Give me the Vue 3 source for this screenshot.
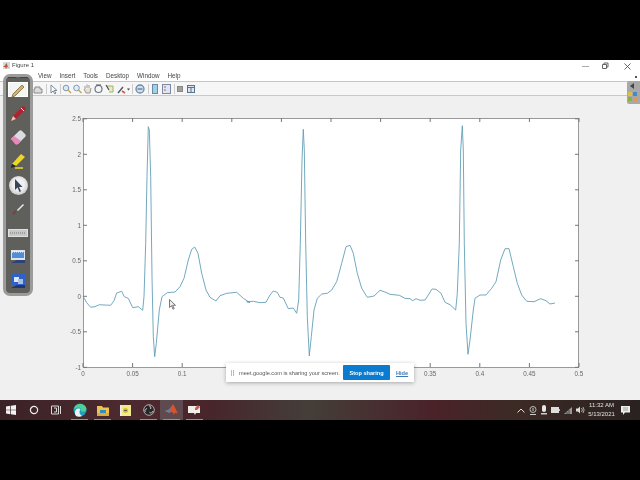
<script setup>
const s7 = [[10,560],[20,578],[32,592],[45,590],[58,584],[72,585],[92,586],[102,572],[110,549],[125,544],[133,560],[145,565],[158,593],[175,590],[188,601],[192,560],[197,400],[201,200],[205,50],[208,60],[212,200],[216,500],[220,680],[224,740],[229,700],[238,600],[246,560],[262,548],[285,546],[300,530],[312,505],[325,450],[335,418],[344,411],[354,430],[365,490],[378,540],[390,562],[408,573],[420,557],[440,550],[470,547],[490,565],[510,578]]
const s8 = [[20,575],[40,574],[60,578],[78,577],[90,555],[100,543],[112,547],[120,562],[130,564],[145,596],[160,594],[170,610],[176,570],[181,400],[186,150],[190,58],[193,120],[197,400],[202,620],[208,738],[214,680],[222,600],[232,565],[245,552],[262,550],[275,540],[290,515],[305,460],[318,410],[330,406],[340,430],[352,490],[365,535],[382,562],[402,558],[420,541],[435,546],[450,553],[478,556],[495,565],[510,566]]
const s9 = [[8,572],[18,566],[30,571],[45,570],[55,555],[66,537],[78,538],[93,550],[105,577],[120,584],[137,600],[142,550],[148,400],[152,120],[157,47],[160,120],[163,400],[168,640],[174,733],[180,690],[190,600],[195,565],[210,555],[228,555],[245,535],[258,515],[272,450],[285,416],[297,416],[310,470],[322,520],[335,555],[350,574],[372,575],[392,566],[408,572],[420,582],[435,579]]
const conv = (pts, ox) => pts.map(([x, y]) => `${(ox + x / 3).toFixed(1)},${(110 + y / 3).toFixed(1)}`)
const curve = [...conv(s7, 80), ...conv(s8, 240), ...conv(s9, 410)].join(' ')

const xTicks = ['0', '0.05', '0.1', '0.15', '0.2', '0.25', '0.3', '0.35', '0.4', '0.45', '0.5'].map((label, i) => ({ label, x: 83 + i * 49.6 }))
const xLabels = xTicks.filter(t => t.x < 226 || t.x > 414)
const yTicks = ['2.5', '2', '1.5', '1', '0.5', '0', '-0.5', '-1'].map((label, i) => ({ label, y: 118.8 + i * 35.5 }))
const menus = ['View', 'Insert', 'Tools', 'Desktop', 'Window', 'Help']
</script>

<template>
  <div class="screen">
    <div class="bar-black"></div>
    <div class="window">
      <div class="titlebar">
        <svg class="app-ico" width="7" height="7" viewBox="0 0 7 7">
          <rect width="7" height="7" fill="#d9d9d9" />
          <path d="M0 5 2.500 3 3.500 1 5 5 7 6 4 5 3 7 2 5Z" fill="#c8562a" />
          <path d="M2.500 3 3.500 1 3.500 4Z" fill="#3d6f9e" />
        </svg>
        <span class="title">Figure 1</span>
        <span class="spacer"></span>
        <svg class="controls" width="60" height="10" viewBox="0 0 60 10">
          <path d="M2 5.500H9" stroke="#aaa" />
          <path d="M22.500 3.500h4v4h-4zM24 3.500v-1.500h4v4h-1.500" fill="none" stroke="#666" />
          <path d="M44.500 2.500l6 6M50.500 2.500l-6 6" stroke="#555" stroke-width=".9" />
        </svg>
      </div>
      <div class="menubar">
        <span v-for="m in menus" :key="m">{{ m }}</span>
      </div>
      <svg class="toolbar" width="640" height="13" viewBox="0 82 640 13">
        <g fill="none" stroke-width="1">
          <path d="M35 87h5v2h2v4h-8v-4h1z" fill="#dcdcdc" stroke="#888" />
          <path d="M46.500 84v10M60.500 84v10M132.500 84v10M148.500 84v10M174.500 84v10" stroke="#ccc" />
          <path d="M51 85v8l2-2 2 3 1-1-2-2.500h3z" stroke="#7d8c9a" fill="#fff" />
          <circle cx="66" cy="88" r="2.800" stroke="#7d9ab8" fill="#dce9f5" />
          <path d="M68 90l3 3" stroke="#c0a050" stroke-width="1.300" />
          <circle cx="76.500" cy="88" r="2.800" stroke="#7d9ab8" fill="#e4edf5" />
          <path d="M78.500 90l3 3" stroke="#c0a050" stroke-width="1.300" />
          <path d="M85 89v-3M87 88v-3.500M89 88v-3M84 89l2 4h4l1-5" stroke="#999" fill="#f0ddcc" />
          <circle cx="98.500" cy="89" r="3.500" stroke="#6a7a88" stroke-width="1.200" />
          <path d="M96 85h5" stroke="#555" />
          <path d="M107 86h6v6h-4" stroke="#a0b460" fill="#e4eccd" />
          <path d="M106 85l3 5" stroke="#444" stroke-width="1.100" />
          <path d="M118 93l5-6" stroke="#4a5a68" stroke-width="1.400" />
          <path d="M122 91l3 2" stroke="#d0604a" stroke-width="1.800" />
          <path d="M127 88.500h3l-1.500 2z" fill="#444" />
          <circle cx="140" cy="89" r="4" stroke="#6a8aa8" stroke-width="1.300" fill="#cfe0ee" />
          <path d="M137.500 89h5" stroke="#557" />
          <rect x="152.500" y="84.500" width="5" height="9" stroke="#6a8aa8" fill="#9fd0e8" />
          <rect x="162.500" y="84.500" width="8" height="9" stroke="#7a8aa8" fill="#dfe6f0" />
          <path d="M164 87h2M164 90h2" stroke="#c06060" />
          <rect x="177.500" y="86.500" width="5" height="5" stroke="#888" fill="#a0a0a0" />
          <rect x="187.500" y="85.500" width="7" height="7" stroke="#557590" fill="#dfe6ee" />
          <path d="M188 87.500h6M191 88v4" stroke="#557590" />
        </g>
      </svg>
      <div class="figure">
        <svg class="plot" width="640" height="305" viewBox="0 96 640 305">
          <rect x="83.500" y="118.500" width="495" height="249" fill="#fff" stroke="#999" />
          <g stroke="#777" stroke-width="1">
            <g v-for="t in xTicks" :key="'x' + t.label">
              <path :d="`M${t.x} 118v4M${t.x} 367v-4`" />
            </g>
            <g v-for="t in yTicks" :key="'y' + t.label">
              <path :d="`M83 ${t.y}h4M579 ${t.y}h-4`" />
            </g>
          </g>
          <polyline :points="curve" fill="none" stroke="#639fb7" stroke-width=".9" stroke-linejoin="round" />
          <g class="ticktext">
            <text v-for="t in xLabels" :key="'lx' + t.label" :x="t.x" y="376" text-anchor="middle">{{ t.label }}</text>
            <text v-for="t in yTicks" :key="'ly' + t.label" x="81" :y="t.y + 2.500" text-anchor="end">{{ t.label }}</text>
          </g>
        </svg>
      </div>
    </div>
    <div class="taskbar">
      <div class="task first">
        <svg width="10" height="10" viewBox="0 0 10 10"><path d="M0 1.500 4.300.8v3.900H0zM5 .7 10 0v4.700H5zM0 5.300h4.300v3.900L0 8.500zM5 5.300h5V10l-5-.7z" fill="#f2f2f2" /></svg>
      </div>
      <div class="task">
        <svg width="10" height="10" viewBox="0 0 10 10"><circle cx="5" cy="5" r="3.600" fill="none" stroke="#eee" stroke-width="1.200" /></svg>
      </div>
      <div class="task">
        <svg width="11" height="10" viewBox="0 0 11 10"><path d="M.5 1h7v8h-7zM3 3h2.500v4H3M9.500 1v8" fill="none" stroke="#d8d8d8" /></svg>
      </div>
      <div class="task run">
        <svg width="14" height="14" viewBox="0 0 14 14">
          <circle cx="7" cy="7" r="6.500" fill="#1f9fc0" />
          <path d="M1 6C2 1 8-.5 12 3c1.500 1.500 1.500 3 1 4.500-1 1.500-4 1.500-5 .5 1-2-1-4-3-3.500C3.500 5 2 5.500 1 6z" fill="#4fd28f" />
          <path d="M3 13c-2-3-1-7 2-7.500 1-.2 2 0 2.500 1C6 8 6 11 9 13c-2 1-4 1-6 0z" fill="#eaf4f8" />
        </svg>
      </div>
      <div class="task run">
        <svg width="12" height="11" viewBox="0 0 12 11"><path d="M0 1h5l1 1.500h6V11H0z" fill="#f0c24e" /><path d="M3 5h6v3H3z" fill="#2f8fc0" /><path d="M0 8h12v3H0z" fill="#e0a93a" /></svg>
      </div>
      <div class="task">
        <svg width="11" height="11" viewBox="0 0 11 11"><rect width="11" height="11" fill="#f2e98a" /><rect y="0" width="1.500" height="11" fill="#eee" /><circle cx="5.500" cy="5.500" r="2.500" fill="#d8c020" /><path d="M4 5.500h3" stroke="#555" /></svg>
      </div>
      <div class="task run">
        <svg width="12" height="12" viewBox="0 0 12 12">
          <circle cx="6" cy="6" r="5.300" fill="#2a2527" stroke="#ccc" stroke-width="0.800" />
          <path d="M6 1.800a2 2 0 0 1 1.500 3.200M10 7a2 2 0 0 1-3.500 1.200M2.300 7.800a2 2 0 0 1 1.700-3.100" fill="none" stroke="#ccc" stroke-width="1" />
        </svg>
      </div>
      <div class="task run active">
        <svg width="13" height="12" viewBox="0 0 13 12">
          <path d="M0 7l4-1.500L8 0c1.500 2 3 6 5 9.500C11 8.500 10 8 9 10.500 7.500 8 6 7 4.500 9z" fill="#d8532a" />
          <path d="M0 7l4-1.500 2-2L4.500 9z" fill="#4a86c0" />
        </svg>
      </div>
      <div class="task run">
        <svg width="13" height="11" viewBox="0 0 13 11"><path d="M0 1h12v7H8l-1 2-1-2H0z" fill="#f2efe6" /><path d="M10 0l2 2-3 3h-2V3z" fill="#c0605a" /></svg>
      </div>
      <span class="spacer"></span>
      <div class="tray">
        <svg width="8" height="5" viewBox="0 0 8 5"><path d="M.5 4.500 4 1l3.500 3.500" fill="none" stroke="#ddd" /></svg>
        <svg width="8" height="9" viewBox="0 0 8 9"><circle cx="4" cy="3.500" r="3" fill="none" stroke="#bbb" /><path d="M1 8.500h6M4 2v3" stroke="#ccc" /></svg>
        <svg width="6" height="10" viewBox="0 0 6 10"><rect x="1" width="4" height="7" rx="2" fill="#e8e8e8" /><path d="M0 8h6v1.500H0z" fill="#ccc" /></svg>
        <svg width="9" height="6" viewBox="0 0 9 6"><rect width="8" height="6" fill="#ddd" /><rect x="8" y="2" width="1" height="2" fill="#bbb" /></svg>
        <svg width="8" height="7" viewBox="0 0 8 7"><path d="M0 7 8 0v7z" fill="#999" /><path d="M3 7V5M5 7V3" stroke="#444" /></svg>
        <svg width="9" height="8" viewBox="0 0 9 8"><path d="M0 2.500h2L4 .5v7l-2-2H0z" fill="#ddd" /><path d="M5.500 2a3 3 0 0 1 0 4M7 1a5 5 0 0 1 0 6" fill="none" stroke="#ccc" stroke-width=".8" /></svg>
      </div>
      <div class="clock"><span>11:32 AM</span><span>5/13/2021</span></div>
      <svg class="notif" width="9" height="9" viewBox="0 0 9 9"><path d="M0 0h9v6.500H4L2 9V6.500H0z" fill="#eee" /><path d="M2 2h5M2 4h5" stroke="#777" stroke-width=".7" /></svg>
    </div>
    <div class="bar-black"></div>

    <div class="notebook">
      <div class="grip"><i></i><i></i></div>
      <div class="tool">
        <svg width="20" height="15" viewBox="0 0 20 15"><rect x=".5" y=".5" width="19" height="14" fill="#f4f4f0" stroke="#fff" /><path d="M5 12 14 3l2 2-9 9-3 1z" fill="#d8b26a" stroke="#6a5a3a" stroke-width=".7" /></svg>
      </div>
      <div class="tool">
        <svg width="17" height="17" viewBox="0 0 17 17"><path d="M1 16l2-5L12 2c1-1 2-1 3 0s1 2 0 3l-9 9z" fill="#b4202e" /><path d="M1 16l2-5 3 3z" fill="#e8c8b0" /><path d="M11 3l3 3" stroke="#eec" /></svg>
      </div>
      <div class="tool">
        <svg width="17" height="15" viewBox="0 0 17 15"><path d="M1 9 9 1c1-1 2-1 3 0l3 3c1 1 1 2 0 3l-7 7z" fill="#d8dde4" /><path d="M1 9l3-3 7 5-3 3c-1 1-2 1-3 0z" fill="#e888b8" /></svg>
      </div>
      <div class="tool">
        <svg width="16" height="16" viewBox="0 0 16 16"><path d="M2 11 11 1l4 3-9 9z" fill="#ecd820" /><path d="M1 15l1-4 4 2z" fill="#222" /><path d="M5 15h8" stroke="#ecd820" stroke-width="1.500" /></svg>
      </div>
      <div class="tool">
        <div class="round">
          <svg width="9" height="13" viewBox="0 0 9 13"><path d="M1 0v11l2.500-2.500L5.500 13l1.500-.7-2-4.300H8.500z" fill="#3a4458" /></svg>
        </div>
      </div>
      <div class="tool">
        <svg width="14" height="14" viewBox="0 0 14 14"><path d="M6 8l6-6 1 1-6 6z" fill="#eee" /><path d="M5 9 2 12" stroke="#8a3a3a" stroke-width="2" /></svg>
      </div>
      <div class="tool">
        <svg width="20" height="10" viewBox="0 0 20 10"><rect x=".5" y="1.500" width="19" height="7" fill="#c8c8c8" stroke="#e0e0e0" /><path d="M2 5h16" stroke="#777" stroke-dasharray="1 1" /></svg>
      </div>
      <div class="tool">
        <svg width="14" height="14" viewBox="0 0 14 14"><rect width="14" height="10" fill="#dde4ee" /><rect x="1" y="2" width="12" height="6" fill="#4f8fd8" /><path d="M1 2h12" stroke="#fff" stroke-dasharray="1 1" /><path d="M0 13l6-3h8v3z" fill="#2f3f78" /></svg>
      </div>
      <div class="tool">
        <svg width="14" height="15" viewBox="0 0 14 15"><rect width="14" height="11" fill="#2f62c8" /><rect x="3" y="3" width="5" height="5" fill="#dfe8f5" /><rect x="7" y="5" width="5" height="5" fill="#a8c0e0" /><path d="M0 14l6-3h8v3z" fill="#223670" /></svg>
      </div>
    </div>

    <div class="sidegrip">
      <svg width="12" height="22" viewBox="0 0 12 22">
        <path d="M3 5l4-3v6z" fill="#444" />
        <rect x="1" y="11" width="4" height="4" fill="#d8c040" />
        <rect x="6" y="11" width="4" height="4" fill="#4a8aba" />
        <rect x="1" y="16" width="4" height="4" fill="#8ab040" />
        <rect x="6" y="16" width="4" height="4" fill="#d89a60" />
      </svg>
    </div>
    <span class="sidedot"></span>

    <svg class="cursor" width="8" height="11" viewBox="0 0 8 11"><path d="M.5.500v8l2-1.800 1.500 3.500 1.200-.6-1.500-3.300h2.800z" fill="#eee" stroke="#444" stroke-width=".7" /></svg>

    <div class="share">
      <span class="handle"><i></i><i></i></span>
      <span class="msg">meet.google.com is sharing your screen.</span>
      <span class="stop">Stop sharing</span>
      <span class="hide">Hide</span>
    </div>
  </div>
</template>

<style scoped>
.screen { position: relative; width: 640px; height: 480px; background: #000; display: flex; flex-direction: column; overflow: hidden; font-family: "Liberation Sans", Arial, sans-serif; filter: blur(.3px); }
.bar-black { height: 60px; flex: none; background: #000; }
.window { height: 340px; flex: none; background: #f0f0f0; display: flex; flex-direction: column; }
.titlebar { height: 10px; flex: none; padding: 0 3px; background: #fff; display: flex; align-items: center; gap: 2px; }
.title { font-size: 6px; color: #444; }
.spacer { flex: 1; }
.app-ico { flex: none; margin-top: 1px; }
.controls { flex: none; margin-right: -3px; margin-top: 1px; }
.menubar { height: 12px; flex: none; background: #fff; padding-left: 38px; display: flex; gap: 8px; align-items: center; font-size: 6.300px; color: #444; border-bottom: 1px solid #c6c6c6; box-sizing: border-box; }
.toolbar { display: block; flex: none; background: #f6f6f6; border-bottom: 1px solid #c8c8c8; }
.figure { flex: 1; min-height: 0; }
.plot { display: block; }
.ticktext text { font-size: 6.300px; fill: #666; font-family: "Liberation Sans", Arial, sans-serif; }
.taskbar { height: 20px; flex: none; display: flex; align-items: center; background: linear-gradient(90deg, #3a2226 0%, #4d2a30 20%, #47252b 33%, #443e39 48%, #4a2229 68%, #3c2a25 80%, #2a2220 100%); }
.task { width: 23px; height: 20px; flex: none; display: flex; align-items: center; justify-content: center; position: relative; }
.task.first { width: 22px; }
.task.run::after { content: ""; position: absolute; left: 3px; right: 3px; bottom: 0; height: 1px; background: #8c93a6; }
.task.active { background: #5f4a50; }
.tray { display: flex; align-items: center; gap: 4px; margin-right: 4px; }
.clock { display: flex; flex-direction: column; align-items: center; font-size: 6px; line-height: 9px; color: #e0e0e0; width: 26px; }
.notif { margin: 0 10.500px 0 6px; flex: none; }

.notebook { position: absolute; left: 3px; top: 74px; width: 30px; height: 222px; box-sizing: border-box; background: #5f5f5c; border: 3px solid #9b9b9b; border-radius: 7px; display: flex; flex-direction: column; align-items: center; }
.grip { height: 0; display: flex; gap: 4px; flex: none; }
.grip i { width: 8px; height: 1px; background: #444; }
.tool { height: 24px; width: 24px; flex: none; display: flex; align-items: center; justify-content: center; }
.round { width: 19px; height: 19px; border-radius: 50%; background: radial-gradient(circle at 50% 45%, #f0f0f0 40%, #b0b0b0 100%); display: flex; align-items: center; justify-content: center; }

.sidegrip { position: absolute; right: 0; top: 81px; width: 13px; height: 23px; background: #a8a8a8; border-radius: 2px 0 0 2px; }
.sidedot { position: absolute; left: 635px; top: 76px; width: 2px; height: 2px; background: #555; }
.cursor { position: absolute; left: 169px; top: 299px; }

.share { position: absolute; left: 226px; top: 363px; width: 188px; height: 19px; box-sizing: border-box; padding: 0 5px; background: #fff; box-shadow: 0 1px 4px rgba(0, 0, 0, .3); display: flex; align-items: center; font-size: 5.600px; color: #555; }
.handle { display: flex; gap: 1px; margin-right: 5px; }
.handle i { width: 1px; height: 6px; background: #bbb; }
.msg { flex: 1; white-space: nowrap; }
.stop { width: 47px; height: 15px; background: #0b7bd0; color: #fff; font-weight: bold; display: flex; align-items: center; justify-content: center; border-radius: 1px; }
.hide { margin-left: 6px; width: 13px; color: #3f78b0; font-weight: bold; text-decoration: underline; }
</style>
